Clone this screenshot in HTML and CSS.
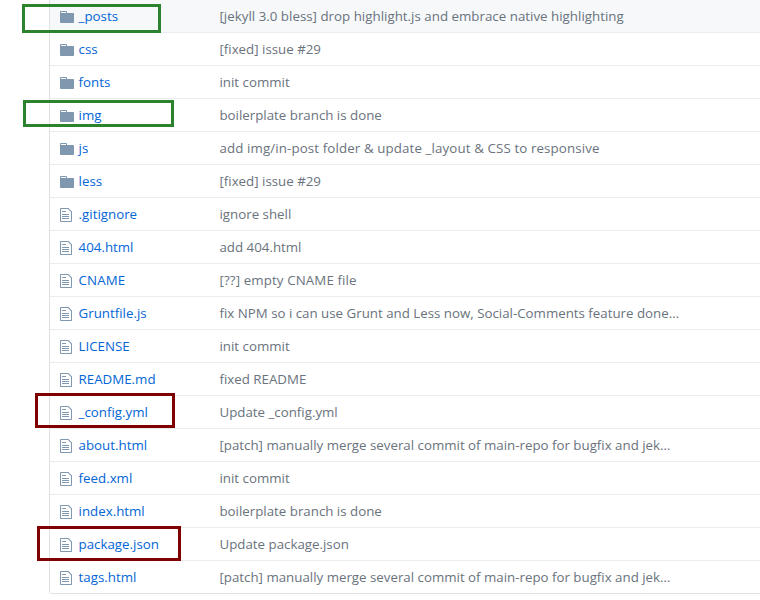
FILE: index.html
```html
<!DOCTYPE html>
<html lang="en">
<head>
<meta charset="utf-8">
<title>Files</title>
<link rel="stylesheet" href="styles.css">
</head>
<body>
<svg class="defs" width="0" height="0">
<symbol id="dir" viewBox="0 0 14 16"><path d="M13 4H7V3c0-.66-.31-1-1-1H1c-.55 0-1 .45-1 1v10c0 .55.45 1 1 1h12c.55 0 1-.45 1-1V5c0-.55-.45-1-1-1zM6 4H1V3h5v1z"/></symbol>
<symbol id="file" viewBox="0 0 12 16"><path d="M6 5H2V4h4v1zM2 8h7V7H2v1zm0 2h7V9H2v1zm0 2h7v-1H2v1zm10-7.5V14c0 .55-.45 1-1 1H1c-.55 0-1-.45-1-1V2c0-.55.45-1 1-1h7.5L12 4.5zM11 5L8 2H1v12h10V5z"/></symbol>
</svg>
<main class="files">
<div class="row hover"><svg class="icon dir"><use href="#dir"/></svg><a class="name">_posts</a><span class="msg loose">[jekyll 3.0 bless] drop highlight.js and embrace native highlighting</span></div>
<div class="row"><svg class="icon dir"><use href="#dir"/></svg><a class="name">css</a><span class="msg">[fixed] issue #29</span></div>
<div class="row"><svg class="icon dir"><use href="#dir"/></svg><a class="name">fonts</a><span class="msg">init commit</span></div>
<div class="row"><svg class="icon dir"><use href="#dir"/></svg><a class="name">img</a><span class="msg">boilerplate branch is done</span></div>
<div class="row"><svg class="icon dir"><use href="#dir"/></svg><a class="name">js</a><span class="msg looser">add img/in-post folder &amp; update _layout &amp; CSS to responsive</span></div>
<div class="row"><svg class="icon dir"><use href="#dir"/></svg><a class="name">less</a><span class="msg">[fixed] issue #29</span></div>
<div class="row"><svg class="icon"><use href="#file"/></svg><a class="name">.gitignore</a><span class="msg">ignore shell</span></div>
<div class="row"><svg class="icon"><use href="#file"/></svg><a class="name">404.html</a><span class="msg">add 404.html</span></div>
<div class="row"><svg class="icon"><use href="#file"/></svg><a class="name looser">CNAME</a><span class="msg looser">[??] empty CNAME file</span></div>
<div class="row"><svg class="icon"><use href="#file"/></svg><a class="name">Gruntfile.js</a><span class="msg">fix NPM so i can use Grunt and Less now, Social-Comments feature done…</span></div>
<div class="row"><svg class="icon"><use href="#file"/></svg><a class="name">LICENSE</a><span class="msg">init commit</span></div>
<div class="row"><svg class="icon"><use href="#file"/></svg><a class="name">README.md</a><span class="msg">fixed README</span></div>
<div class="row"><svg class="icon"><use href="#file"/></svg><a class="name">_config.yml</a><span class="msg">Update _config.yml</span></div>
<div class="row"><svg class="icon"><use href="#file"/></svg><a class="name">about.html</a><span class="msg">[patch] manually merge several commit of main-repo for bugfix and jek…</span></div>
<div class="row"><svg class="icon"><use href="#file"/></svg><a class="name">feed.xml</a><span class="msg">init commit</span></div>
<div class="row"><svg class="icon"><use href="#file"/></svg><a class="name">index.html</a><span class="msg">boilerplate branch is done</span></div>
<div class="row"><svg class="icon"><use href="#file"/></svg><a class="name">package.json</a><span class="msg">Update package.json</span></div>
<div class="row last"><svg class="icon"><use href="#file"/></svg><a class="name">tags.html</a><span class="msg">[patch] manually merge several commit of main-repo for bugfix and jek…</span></div>
</main>
<div class="mark green posts"></div>
<div class="mark green img"></div>
<div class="mark red config"></div>
<div class="mark red package"></div>
</body>
</html>
```
FILE: styles.css
```css
* { box-sizing: border-box; }
body {
  margin: 0;
  height: 600px;
  overflow: hidden;
  position: relative;
  background: #fff;
  font: 13.3px/20px "Open Sans", "Noto Sans", sans-serif;
  color: #6a737d;
}
.defs { position: absolute; }
.files {
  margin-left: 49px;
  border-left: 1px solid #dfe2e5;
  border-bottom-left-radius: 3px;
  overflow: hidden;
}
.row {
  display: grid;
  grid-template-columns: 18.6px 140.9px 1fr;
  height: 33px;
  padding: 6px 0 6px 10px;
  border-bottom: 1px solid #eaecef;
  white-space: nowrap;
}
.hover { background: #f6f8fa; }
.last { border-bottom-color: #dfe2e5; }
.icon {
  width: 12px;
  height: 16px;
  margin-top: 3px;
  fill: #8097b0;
}
.dir { width: 14px; }
.name { color: #0366d6; }
.loose { letter-spacing: 0.02px; }
.looser { letter-spacing: 0.12px; }
.mark { position: absolute; border: 3px solid; }
.green { border-color: #2d832d; }
.red { border-color: #800000; }
.posts { left: 22px; top: 4px; width: 139px; height: 29px; }
.img { left: 23px; top: 100px; width: 151px; height: 27px; }
.config { left: 35px; top: 393px; width: 140px; height: 35px; }
.package { left: 37px; top: 526px; width: 144px; height: 35px; }
```
